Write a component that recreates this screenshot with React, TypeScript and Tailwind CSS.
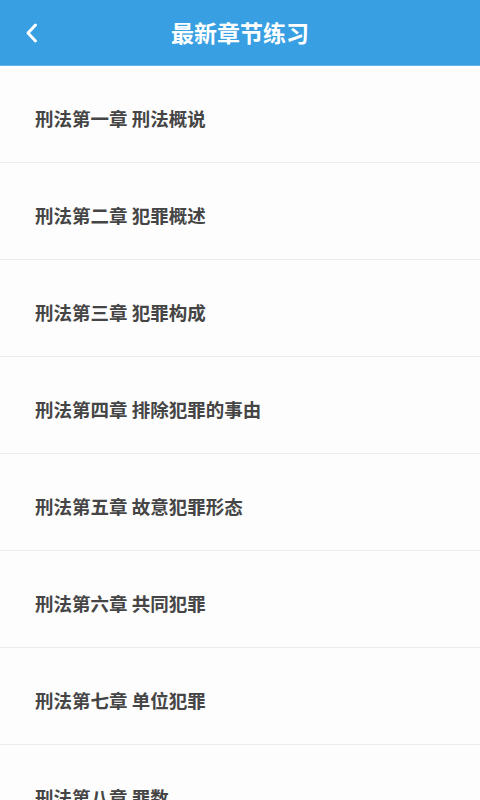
import React from "react";

const chapters = [
  "刑法第一章 刑法概说",
  "刑法第二章 犯罪概述",
  "刑法第三章 犯罪构成",
  "刑法第四章 排除犯罪的事由",
  "刑法第五章 故意犯罪形态",
  "刑法第六章 共同犯罪",
  "刑法第七章 单位犯罪",
  "刑法第八章 罪数",
];

const App: React.FC = () => {
  return (
    <div
      className="w-[480px] h-[800px] overflow-hidden bg-[#fdfdfd] flex flex-col"
      style={{ fontFamily: '"Noto Sans CJK SC", "Noto Sans", sans-serif' }}
    >
      <div className="h-[66px] shrink-0 bg-[#379fe2] flex items-center relative border-b border-[#5fb3ea]">
        <button className="absolute left-[20px] top-[20px] w-[24px] h-[26px] flex items-center justify-center">
          <svg width="16" height="22" viewBox="0 0 16 22" fill="none">
            <path
              d="M11.5 3L4 11L11.5 19"
              stroke="white"
              strokeWidth="3"
              strokeLinecap="round"
              strokeLinejoin="round"
            />
          </svg>
        </button>
        <h1 className="flex-1 text-center text-white text-[23px] font-bold leading-none">
          最新章节练习
        </h1>
      </div>

      <div className="flex flex-col">
        {chapters.map((title) => (
          <div
            key={title}
            className="h-[97px] shrink-0 border-b border-[#ececec] flex items-center pl-[35px] pt-[8px]"
          >
            <span className="text-[18.5px] font-semibold text-[#454545] leading-none">
              {title}
            </span>
          </div>
        ))}
      </div>
    </div>
  );
};

export default App;
